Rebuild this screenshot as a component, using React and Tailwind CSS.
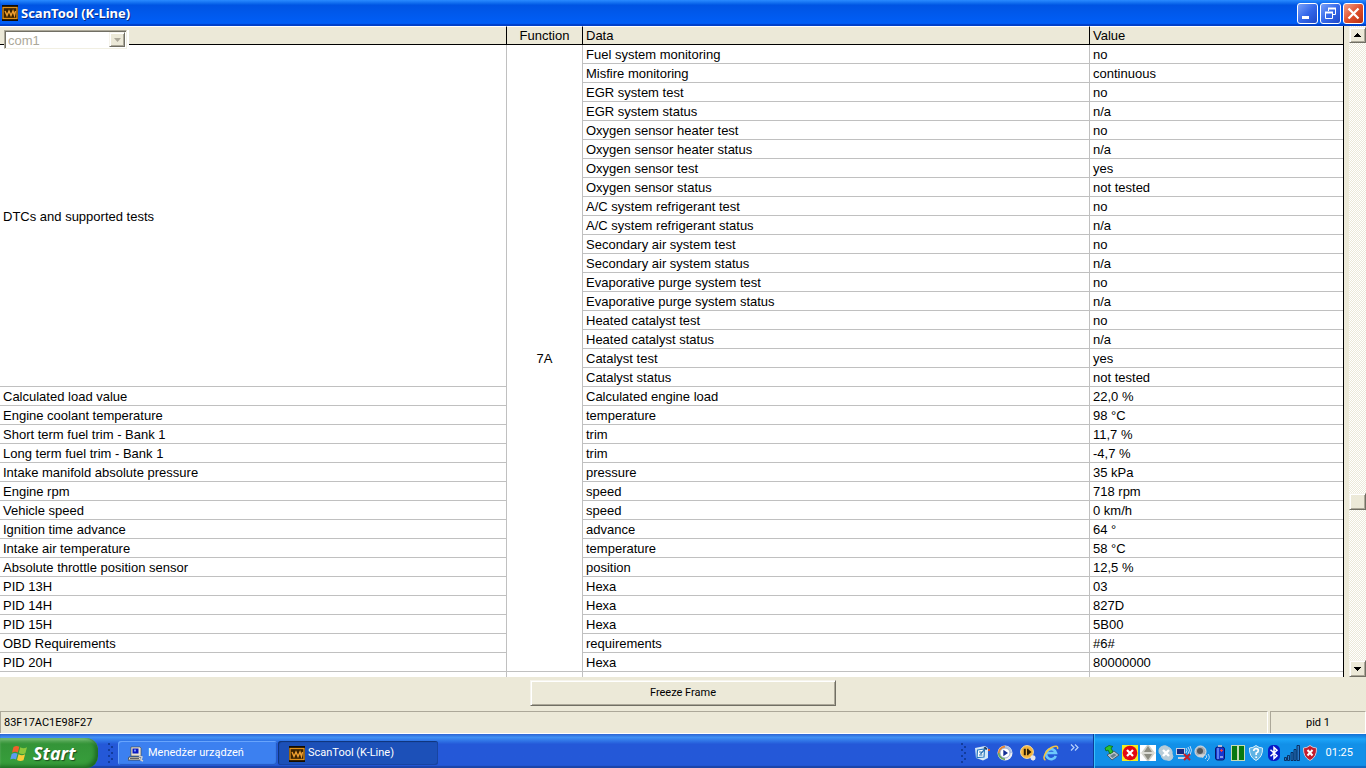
const tests = [
  ["Fuel system monitoring", "no"],
  ["Misfire monitoring", "continuous"],
  ["EGR system test", "no"],
  ["EGR system status", "n/a"],
  ["Oxygen sensor heater test", "no"],
  ["Oxygen sensor heater status", "n/a"],
  ["Oxygen sensor test", "yes"],
  ["Oxygen sensor status", "not tested"],
  ["A/C system refrigerant test", "no"],
  ["A/C system refrigerant status", "n/a"],
  ["Secondary air system test", "no"],
  ["Secondary air system status", "n/a"],
  ["Evaporative purge system test", "no"],
  ["Evaporative purge system status", "n/a"],
  ["Heated catalyst test", "no"],
  ["Heated catalyst status", "n/a"],
  ["Catalyst test", "yes"],
  ["Catalyst status", "not tested"],
];

const pids = [
  ["Calculated load value", "Calculated engine load", "22,0 %"],
  ["Engine coolant temperature", "temperature", "98 °C"],
  ["Short term fuel trim - Bank 1", "trim", "11,7 %"],
  ["Long term fuel trim - Bank 1", "trim", "-4,7 %"],
  ["Intake manifold absolute pressure", "pressure", "35 kPa"],
  ["Engine rpm", "speed", "718 rpm"],
  ["Vehicle speed", "speed", "0 km/h"],
  ["Ignition time advance", "advance", "64 °"],
  ["Intake air temperature", "temperature", "58 °C"],
  ["Absolute throttle position sensor", "position", "12,5 %"],
  ["PID 13H", "Hexa", "03"],
  ["PID 14H", "Hexa", "827D"],
  ["PID 15H", "Hexa", "5B00"],
  ["OBD Requirements", "requirements", "#6#"],
  ["PID 20H", "Hexa", "80000000"],
];

const raised =
  "bg-[#ece9d8] border border-t-[#f6f4ec] border-l-[#f6f4ec] border-r-[#716f64] border-b-[#716f64] shadow-[inset_1px_1px_0_#ffffff,inset_-1px_-1px_0_#aca899]";

function ScopeIcon() {
  return (
    <svg className="size-4 shrink-0" viewBox="0 0 16 16" aria-hidden="true">
      <rect width="16" height="16" fill="#140c00" />
      <rect x="1" y="2.500" width="14" height="11" fill="#3a2200" stroke="#e0921c" strokeWidth="1.300" />
      <path d="M3 6l2 4.500 2-4.500 2 4.500 2-4.500 1.500 4.500 1-4.500" fill="none" stroke="#f0a030" strokeWidth="1.400" />
    </svg>
  );
}

function TitleButton({ label, className, children }) {
  return (
    <button
      type="button"
      aria-label={label}
      className={`flex size-[21px] items-center justify-center rounded-[3px] border border-white ${className}`}
    >
      {children}
    </button>
  );
}

function TitleBar() {
  return (
    <header className="flex h-[26px] shrink-0 items-center gap-[3px] bg-linear-to-b from-[#2a8bff] via-[#0054e3] via-20% to-[#0060fa] pr-[2px] pl-[2px] shadow-[inset_0_-2px_1px_#0040c8]">
      <ScopeIcon />
      <h1 className="flex-1 font-['Noto_Sans','Open_Sans',sans-serif] text-[13px] leading-5 font-bold text-white [text-shadow:1px_1px_0_#0a2a80]">
        ScanTool (K-Line)
      </h1>
      <div className="flex gap-[2px]">
        <TitleButton label="Minimize" className="bg-linear-to-br from-[#7aa0f8] via-[#3568ea] to-[#1f48c8]">
          <svg className="size-[17px]" viewBox="0 0 17 17">
            <path d="M3 11h7v3H3z" fill="#fff" />
          </svg>
        </TitleButton>
        <TitleButton label="Restore" className="bg-linear-to-br from-[#7aa0f8] via-[#3568ea] to-[#1f48c8]">
          <svg className="size-[17px]" viewBox="0 0 17 17" fill="none" stroke="#fff">
            <path d="M6.500 6V3.500h7v6H11" />
            <path d="M6 3.500h8" strokeWidth="2" />
            <path d="M3.500 7.500h7v6h-7z" />
            <path d="M3 7.500h8" strokeWidth="2" />
          </svg>
        </TitleButton>
        <TitleButton label="Close" className="bg-linear-to-br from-[#f0a088] via-[#e0502c] to-[#b83010]">
          <svg className="size-[17px]" viewBox="0 0 17 17" fill="none" stroke="#fff" strokeWidth="2.300">
            <path d="M3.500 3.500l10 10M13.500 3.500l-10 10" />
          </svg>
        </TitleButton>
      </div>
    </header>
  );
}

function PortSelect() {
  return (
    <div className="absolute top-1 left-1 flex h-5 w-[125px] border-r-2 border-b border-white bg-[#ece9d8]">
      <div className="relative flex flex-1 border border-t-[#aca899] border-l-[#aca899] border-r-[#f1efe2] border-b-[#f1efe2] bg-white shadow-[inset_1px_1px_0_#716f64]">
        <select
          disabled
          aria-label="Port"
          className="w-full appearance-none pt-[2px] pl-[3px] text-[13px] leading-4 text-[#aca899] opacity-100"
        >
          <option>com1</option>
        </select>
        <span className={`pointer-events-none absolute inset-y-px right-px flex w-4 items-center justify-center ${raised}`}>
          <svg className="h-1 w-[7px]" viewBox="0 0 7 4">
            <path d="M0 0h7L3.500 4z" fill="#aca899" />
          </svg>
        </span>
      </div>
    </div>
  );
}

const th = "h-[19px] border-t border-t-white border-r border-b border-black bg-[#ece9d8] p-0 font-normal leading-[17px]";
const td = "h-[19px] border-r border-b border-[#c0c0c0] p-0 pt-[2px] pl-[3px]";

function DataTable() {
  return (
    <table className="w-full table-fixed border-separate border-spacing-0 text-left text-[13px] leading-4 text-black">
      <colgroup>
        <col className="w-[507px]" />
        <col className="w-[76px]" />
        <col className="w-[507px]" />
        <col />
      </colgroup>
      <thead>
        <tr>
          <th className={th} aria-label="Test" />
          <th className={`${th} text-center`}>Function</th>
          <th className={`${th} pl-[3px]`}>Data</th>
          <th className={`${th} border-r-0 pl-[3px]`}>Value</th>
        </tr>
      </thead>
      <tbody>
        {tests.map(([name, value], i) => (
          <tr key={name}>
            {i === 0 && (
              <>
                <td rowSpan={tests.length} className={td}>
                  DTCs and supported tests
                </td>
                <td
                  rowSpan={tests.length + pids.length}
                  className="border-r border-b border-[#c0c0c0] p-0 pt-[2px] text-center"
                >
                  7A
                </td>
              </>
            )}
            <td className={td}>{name}</td>
            <td className={`${td} border-r-0`}>{value}</td>
          </tr>
        ))}
        {pids.map(([label, name, value]) => (
          <tr key={label}>
            <td className={td}>{label}</td>
            <td className={td}>{name}</td>
            <td className={`${td} border-r-0`}>{value}</td>
          </tr>
        ))}
        {/* next record, cut off by the viewport */}
        <tr>
          <td className={td} />
          <td className={td} />
          <td className={td} />
          <td className={`${td} border-r-0`} />
        </tr>
      </tbody>
    </table>
  );
}

function ScrollBar() {
  return (
    <div className="flex w-[17px] shrink-0 flex-col bg-[repeating-conic-gradient(#ffffff_0%_25%,#ece9d8_0%_50%)] bg-size-[2px_2px] pt-px">
      <button type="button" aria-label="Scroll up" className={`flex h-4 shrink-0 items-center justify-center ${raised}`}>
        <svg className="h-1 w-[7px]" viewBox="0 0 7 4">
          <path d="M3 0h1v1h1v1h1v1h1v1H0V3h1V2h1V1h1z" />
        </svg>
      </button>
      <div className="grow-3" />
      <div className={`h-[17px] shrink-0 ${raised}`} />
      <div className="grow" />
      <button type="button" aria-label="Scroll down" className={`flex h-[17px] shrink-0 items-center justify-center ${raised}`}>
        <svg className="h-1 w-[7px]" viewBox="0 0 7 4">
          <path d="M0 0h7v1H6v1H5v1H4v1H3V3H2V2H1V1H0z" />
        </svg>
      </button>
    </div>
  );
}

function Grip() {
  return (
    <svg className="h-5 w-[6px] shrink-0" viewBox="0 0 6 20" fill="#123c9c">
      <path d="M0 0h2v2H0zM3 3h2v2H3zM0 6h2v2H0zM3 9h2v2H3zM0 12h2v2H0zM3 15h2v2H3zM0 18h2v2H0z" />
    </svg>
  );
}

function ComputerIcon() {
  return (
    <svg className="size-4 shrink-0" viewBox="0 0 16 16">
      <path d="M3 1h9l1 1v8H3z" fill="#e8e4d4" stroke="#404040" strokeWidth=".6" />
      <path d="M4.500 2.500h6v5h-6z" fill="#0a18c0" />
      <path d="M6 3.500h2v2H6z" fill="#7090ff" />
      <path d="M1 11h11l2 3H0z" fill="#e8e4d4" stroke="#303030" strokeWidth=".7" />
      <path d="M2 12.500h9" stroke="#606060" />
      <path d="M11 10l3 1-1 3 2 1" fill="none" stroke="#d0d0d0" strokeWidth="1.500" />
    </svg>
  );
}

function WindowsFlag() {
  return (
    <svg className="size-[19px] shrink-0" viewBox="0 0 19 19">
      <path d="M3.500 3C5.500 1.500 7.500 1.600 9.300 2.800L7.800 8.600C6 7.500 4 7.500 2 8.800z" fill="#f0602c" />
      <path d="M10.300 3.300c2 1.200 4.200 1.300 6.700 0l-1.600 5.900c-2.200 1.200-4.500 1.100-6.600-.1z" fill="#8cc83c" />
      <path d="M1.700 9.900c2-1.300 4-1.300 5.800-.2L6 15.500c-1.800-1.200-3.800-1.100-5.800.1z" fill="#5c9cf0" />
      <path d="M8.500 10.200c2.200 1.200 4.400 1.300 6.600.1l-1.600 5.900c-2.200 1.100-4.400 1-6.500-.2z" fill="#f8cc38" />
    </svg>
  );
}

function QuickLaunch() {
  return (
    <nav aria-label="Quick launch" className="flex items-center gap-[7px]">
      <a href="#desktop" aria-label="Show desktop">
        <svg className="size-4" viewBox="0 0 16 16">
          <path d="M1 3l10-2 3 2v10l-5 2.500L2 13z" fill="#d4e8f8" />
          <path d="M3.500 5l7-1-.5 8-7 .5z" fill="#fff" stroke="#2878c0" strokeWidth="1.200" />
          <path d="M5 7h2.500M5 10h3.500M6.500 9l5-5.500" stroke="#2a70b0" strokeWidth="1.200" />
          <path d="M11 1.500l2.500 2-1 1.500-3-2z" fill="#1c406c" />
          <path d="M14 4h2v2h-2z" fill="#d85030" />
        </svg>
      </a>
      <a href="#player" aria-label="Media player">
        <svg className="size-4" viewBox="0 0 16 16">
          <circle cx="8" cy="8" r="7.500" fill="#f0f0f4" />
          <path d="M8 .8A7.200 7.200 0 0 0 .8 8H4a4 4 0 0 1 4-4z" fill="#e88430" />
          <path d="M8 .8A7.200 7.200 0 0 1 15.200 8H12a4 4 0 0 0-4-4z" fill="#b0c4e8" />
          <path d="M.8 8A7.200 7.200 0 0 0 8 15.200V12a4 4 0 0 1-4-4z" fill="#6ca858" />
          <circle cx="8" cy="8" r="5" fill="#fff" stroke="#9cacd0" />
          <path d="M6.300 4.800L11 8l-4.700 3.200z" fill="#142c94" />
        </svg>
      </a>
      <a href="#classic" aria-label="Player classic">
        <svg className="size-4" viewBox="0 0 16 16">
          <path d="M10 10l5 4-2 2-4-5z" fill="#c8d0e0" />
          <circle cx="7" cy="7" r="6.400" fill="#f4b43c" stroke="#fbe0a0" />
          <path d="M3.800 3.800h2v6.400h-2zM7 3.800h1.500v6.400H7zM8.500 4.500l3 2.500-3 2.500z" fill="#2c1c04" />
          <circle cx="13" cy="12.800" r="2.500" fill="#e4e4ec" />
        </svg>
      </a>
      <a href="#internet" aria-label="Internet Explorer">
        <svg className="size-4" viewBox="0 0 16 16" fill="none">
          <path d="M12.800 11A5 5 0 1 1 13 8H4" stroke="#6cc8fc" strokeWidth="2.600" />
          <path d="M2.500 15C-1 14 2 6 8.500 2.500c4-2 7-2 6 1.500" stroke="#f4c440" strokeWidth="1.500" />
        </svg>
      </a>
      <button type="button" aria-label="More" className="mb-3 ml-1">
        <svg className="h-[7px] w-[9px]" viewBox="0 0 9 7" fill="none" stroke="#b8d4fc" strokeWidth="1.200">
          <path d="M1 .5l3 3-3 3M5 .5l3 3-3 3" />
        </svg>
      </button>
    </nav>
  );
}

const trayIcons = [
  <>
    <path d="M3 10l7-4 5 4-7 5z" fill="#b8c4cc" stroke="#3c4c58" strokeWidth=".8" />
    <path d="M6 11l4-2.500 2.500 1.500-4 3z" fill="#68808c" />
    <path d="M1 3l4-2.500 4 1-2 1.500 2 4-3 2-2-4-2 1z" fill="#2cc42c" stroke="#086010" strokeWidth=".7" />
  </>,
  <>
    <path d="M0 0h16v16H0z" fill="#f4ec20" />
    <circle cx="8" cy="8" r="7.300" fill="#e40810" />
    <path d="M5 5l6 6M11 5l-6 6" stroke="#fff" strokeWidth="2.200" />
  </>,
  <>
    <path d="M0 0h16v16H0z" fill="#d0d0c8" />
    <path d="M0 0h7L1 8l6 8H0zM16 0H9l6 8-6 8h7z" fill="#fff" />
    <path d="M8 1l4 6H4zM8 15l4-6H4z" fill="#8c8c80" />
    <path d="M0 8h16" stroke="#e8e8e0" />
  </>,
  <>
    <path d="M5 1a5 5 0 0 1 5 1 6 6 0 0 1 4 7 4 4 0 0 1-5 6 6 6 0 0 1-6-5 5 5 0 0 1 2-9z" fill="#b8ccd8" stroke="#b8ccd8" />
    <path d="M5 5l6 6M11 5l-6 6" stroke="#fff" strokeWidth="2.400" />
  </>,
  <>
    <path d="M0 3h9v7H0zM2 12h8v2H2z" fill="#c8d0e0" />
    <path d="M1 4h7v5H1z" fill="#182880" />
    <path d="M10 3q2 2 0 5M12 2q3 3 0 7M14 1q3 4 0 9" fill="none" stroke="#d0e4fc" strokeWidth=".9" />
    <path d="M8 9l6 6M14 9l-6 6" stroke="#c41c28" strokeWidth="2" />
  </>,
  <>
    <circle cx="6.500" cy="6.500" r="5.500" fill="#a8acb0" stroke="#e0e4e8" />
    <circle cx="6" cy="6" r="3" fill="#54585c" />
    <path d="M3 10l6 3 2-4z" fill="#d0d4d8" />
    <path d="M12 10q2 2-1 4M14 9q3 4-1 7" fill="none" stroke="#b8dcfc" />
  </>,
  <>
    <rect x="3.500" y="2" width="9" height="13" rx="2" fill="#1838d0" stroke="#081868" />
    <path d="M6 0h4v2H6z" fill="#b0b8d0" />
    <path d="M6 3v11" stroke="#7098fc" strokeWidth="1.500" />
    <path d="M8 5.500h3M9.500 4v3" stroke="#f44040" />
    <path d="M8 12h3" stroke="#fff" />
  </>,
  <>
    <path d="M1 0h14v16H1z" fill="#c4dcb4" />
    <path d="M2 1h5v14H2zM9 1h5v14H9z" fill="#087810" />
  </>,
  <>
    <path d="M8 .5q3 2.500 6.500 2.500Q15 12 8 15.500 1 12 1.500 3 5 3 8 .5z" fill="#60b4e4" stroke="#d8f0fc" />
    <path d="M5.700 6q0-2.300 2.300-2.300t2.300 2Q10.300 7 8.200 8v2M8.200 11.500v1.500" fill="none" stroke="#fff" strokeWidth="1.700" />
  </>,
  <>
    <rect x="2" width="12" height="16" rx="5" fill="#0818c8" />
    <path d="M4.500 4.800l6.500 6-3 2.700v-11l3 2.700-6.500 6" fill="none" stroke="#fff" strokeWidth="1.500" />
  </>,
  <>
    <path d="M.5 12.500h2v3h-2zM3.500 10.500h2v5h-2zM7 7.500h2v8H7zM10 4.500h2v11h-2zM13 .5h2.500v15H13z" fill="#2878c8" stroke="#082858" strokeWidth=".9" />
  </>,
  <>
    <path d="M8 .5q3 2.500 6.500 2.500Q15 12 8 15.500 1 12 1.500 3 5 3 8 .5z" fill="#c41c2c" stroke="#d8c4cc" />
    <path d="M5.500 5l5 5.500M10.500 5l-5 5.500" stroke="#fff" strokeWidth="2" />
  </>,
];

function TaskBar() {
  return (
    <footer className="flex h-[34px] shrink-0 items-stretch bg-linear-to-b from-[#2c64d4] via-[#4090f4] via-10% to-[#2458d8] to-30% font-[Roboto,'Noto_Sans',sans-serif] text-[11px] text-white shadow-[inset_0_-2px_1px_#1c44a8]">
      <button
        type="button"
        className="mt-1 flex w-[98px] items-center gap-1 rounded-r-xl bg-linear-to-b from-[#68b468] via-[#349438] via-20% to-[#38a03c] pl-[10px] shadow-[inset_-3px_-2px_4px_#1c6820,inset_0_2px_2px_#78c078]"
      >
        <WindowsFlag />
        <span className="font-['Open_Sans','Noto_Sans',sans-serif] text-lg leading-5 font-bold italic [text-shadow:1px_1px_1px_#1c4c1c]">
          Start
        </span>
      </button>
      <div className="flex flex-1 items-center pt-1 pl-[10px]">
        <Grip />
        <button
          type="button"
          className="ml-1 flex h-6 w-[159px] items-center gap-1 rounded-[3px] bg-[#3c80f0] pt-px pl-[10px] shadow-[inset_1px_1px_0_#68a4fc,inset_-1px_-1px_1px_#2458c0]"
        >
          <ComputerIcon />
          Menedżer urządzeń
        </button>
        <button
          type="button"
          className="ml-px flex h-6 w-[160px] items-center gap-[3px] rounded-[3px] bg-[#1c50b8] pt-px pl-[11px] shadow-[inset_1px_1px_1px_#103478,inset_-1px_-1px_0_#1844a0]"
        >
          <ScopeIcon />
          ScanTool (K-Line)
        </button>
      </div>
      <div className="flex items-center gap-[7px] pt-1 pr-[14px]">
        <Grip />
        <QuickLaunch />
      </div>
      <div className="flex items-center gap-2 border-l border-[#0c3c98] bg-linear-to-b from-[#1470d4] via-[#1ca4f8] via-15% to-[#1290e8] to-30% pt-1 pr-[13px] pl-[10px] shadow-[inset_1px_0_0_#38c0fc,inset_0_-2px_1px_#1068c0]">
        <div className="flex gap-[2px]">
          {trayIcons.map((icon, i) => (
            <svg key={i} className="size-4" viewBox="0 0 16 16" aria-hidden="true">
              {icon}
            </svg>
          ))}
        </div>
        <time>01:25</time>
      </div>
    </footer>
  );
}

export default function App() {
  return (
    <div className="flex h-screen flex-col overflow-hidden bg-[#ece9d8] font-['Liberation_Sans',Arial,sans-serif] text-black">
      <TitleBar />
      <main className="flex min-h-0 flex-1">
        <div className="relative min-w-0 flex-1 overflow-hidden border-r border-black bg-white">
          <DataTable />
          <PortSelect />
        </div>
        <div className="w-[5px] shrink-0" />
        <ScrollBar />
      </main>
      <div className="flex h-[34px] shrink-0 items-center justify-center text-[11px]">
        <button type="button" className={`mb-[2px] h-[26px] w-[306px] pt-px font-[Roboto,sans-serif] ${raised}`}>
          Freeze Frame
        </button>
      </div>
      <div className="flex h-[23px] shrink-0 gap-[2px] border-b border-white font-[Roboto,sans-serif] text-[11px]">
        <div className="flex flex-1 items-center border border-t-[#aca899] border-r-white border-b-0 border-l-[#aca899] pt-px pl-[3px]">
          83F17AC1E98F27
        </div>
        <div className="flex w-24 items-center justify-center border border-t-[#aca899] border-r-white border-b-0 border-l-[#aca899] pt-px">
          pid 1
        </div>
      </div>
      <TaskBar />
    </div>
  );
}
